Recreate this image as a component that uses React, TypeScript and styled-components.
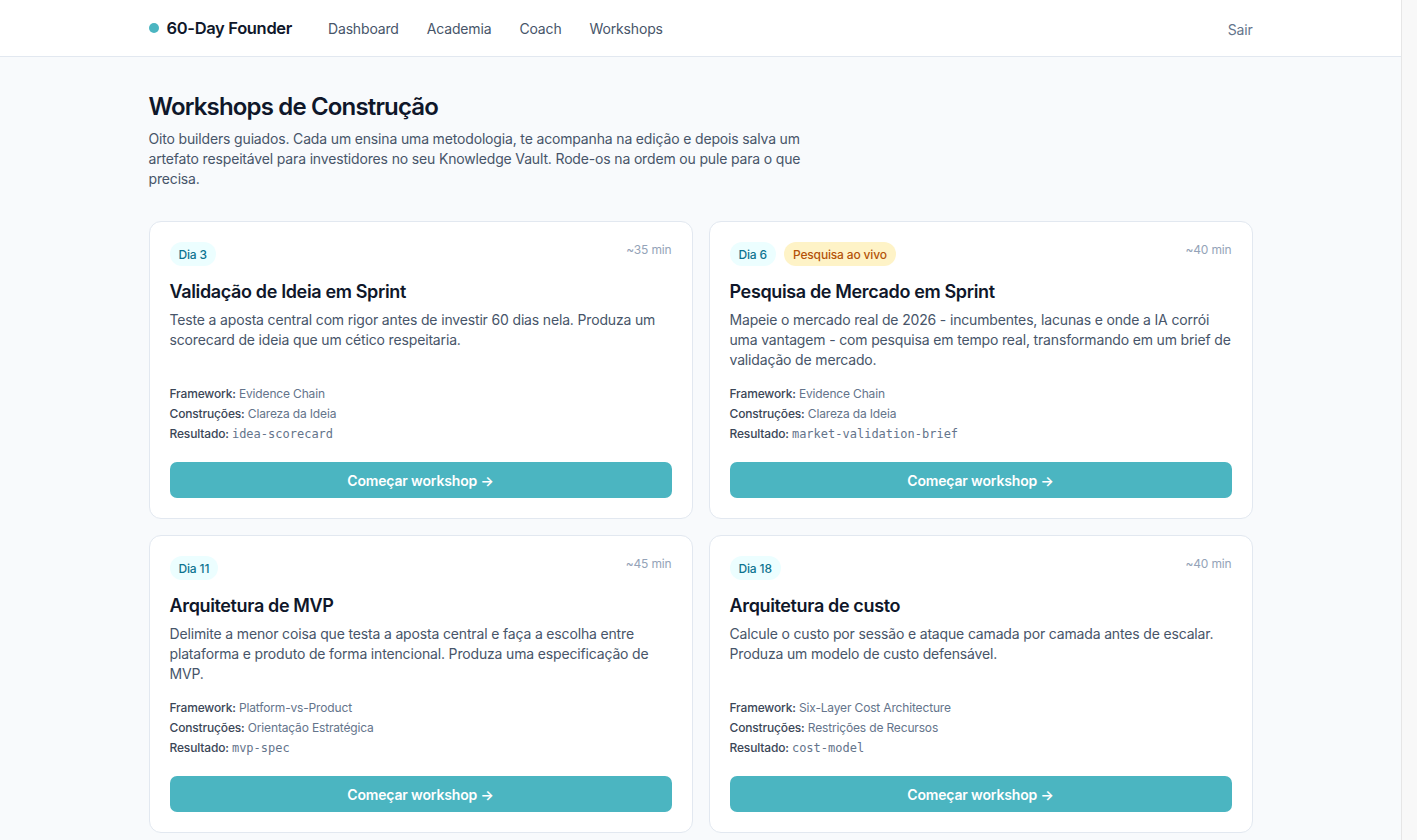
import styled, { createGlobalStyle } from "styled-components";

type Workshop = {
  day: number;
  live?: boolean;
  minutes: number;
  title: string;
  description: string;
  framework: string;
  builds: string;
  output: string;
};

const workshops: Workshop[] = [
  {
    day: 3,
    minutes: 35,
    title: "Validação de Ideia em Sprint",
    description:
      "Teste a aposta central com rigor antes de investir 60 dias nela. Produza um scorecard de ideia que um cético respeitaria.",
    framework: "Evidence Chain",
    builds: "Clareza da Ideia",
    output: "idea-scorecard",
  },
  {
    day: 6,
    live: true,
    minutes: 40,
    title: "Pesquisa de Mercado em Sprint",
    description:
      "Mapeie o mercado real de 2026 - incumbentes, lacunas e onde a IA corrói uma vantagem - com pesquisa em tempo real, transformando em um brief de validação de mercado.",
    framework: "Evidence Chain",
    builds: "Clareza da Ideia",
    output: "market-validation-brief",
  },
  {
    day: 11,
    minutes: 45,
    title: "Arquitetura de MVP",
    description:
      "Delimite a menor coisa que testa a aposta central e faça a escolha entre plataforma e produto de forma intencional. Produza uma especificação de MVP.",
    framework: "Platform-vs-Product",
    builds: "Orientação Estratégica",
    output: "mvp-spec",
  },
  {
    day: 18,
    minutes: 40,
    title: "Arquitetura de custo",
    description:
      "Calcule o custo por sessão e ataque camada por camada antes de escalar. Produza um modelo de custo defensável.",
    framework: "Six-Layer Cost Architecture",
    builds: "Restrições de Recursos",
    output: "cost-model",
  },
  {
    day: 25,
    minutes: 40,
    title: "Estratégia de Go-to-Market",
    description:
      "Escolha o primeiro canal e o primeiro segmento com critério. Produza um plano de lançamento que caiba no seu orçamento.",
    framework: "Channel-Fit Matrix",
    builds: "Orientação Estratégica",
    output: "gtm-plan",
  },
  {
    day: 32,
    minutes: 35,
    title: "Modelo de Precificação",
    description:
      "Defina o preço a partir do valor entregue, não do custo. Produza uma tabela de preços com hipóteses explícitas.",
    framework: "Value-Based Pricing",
    builds: "Restrições de Recursos",
    output: "pricing-model",
  },
  {
    day: 44,
    live: true,
    minutes: 45,
    title: "Análise Competitiva",
    description:
      "Compare alternativas reais que seu cliente usa hoje, com pesquisa em tempo real. Produza um mapa competitivo honesto.",
    framework: "Evidence Chain",
    builds: "Clareza da Ideia",
    output: "competitive-map",
  },
  {
    day: 55,
    minutes: 50,
    title: "Narrativa de Pitch",
    description:
      "Transforme os artefatos do seu Knowledge Vault em uma história coerente para investidores. Produza um roteiro de pitch.",
    framework: "Narrative Arc",
    builds: "Orientação Estratégica",
    output: "pitch-narrative",
  },
];

export default function App() {
  return (
    <>
      <GlobalStyle />
      <Header>
        <HeaderInner>
          <Brand>
            <BrandDot />
            60-Day Founder
          </Brand>
          <Nav>
            <NavLink>Dashboard</NavLink>
            <NavLink>Academia</NavLink>
            <NavLink>Coach</NavLink>
            <NavLink>Workshops</NavLink>
          </Nav>
          <SignOut>Sair</SignOut>
        </HeaderInner>
      </Header>
      <Main>
        <Title>Workshops de Construção</Title>
        <Intro>
          Oito builders guiados. Cada um ensina uma metodologia, te acompanha na
          edição e depois salva um artefato respeitável para investidores no seu
          Knowledge Vault. Rode-os na ordem ou pule para o que precisa.
        </Intro>
        <Grid>
          {workshops.map((w) => (
            <Card key={w.day}>
              <CardTop>
                <Badges>
                  <Badge>Dia {w.day}</Badge>
                  {w.live && <Badge $tone="amber">Pesquisa ao vivo</Badge>}
                </Badges>
                <Duration>~{w.minutes} min</Duration>
              </CardTop>
              <CardTitle>{w.title}</CardTitle>
              <Description>{w.description}</Description>
              <Meta>
                <MetaRow>
                  <MetaLabel>Framework:</MetaLabel> <MetaValue>{w.framework}</MetaValue>
                </MetaRow>
                <MetaRow>
                  <MetaLabel>Construções:</MetaLabel> <MetaValue>{w.builds}</MetaValue>
                </MetaRow>
                <MetaRow>
                  <MetaLabel>Resultado:</MetaLabel> <Code>{w.output}</Code>
                </MetaRow>
              </Meta>
              <StartButton>Começar workshop →</StartButton>
            </Card>
          ))}
        </Grid>
      </Main>
    </>
  );
}

// the reference was taken with a 15px page scrollbar, so keep that gutter
const GlobalStyle = createGlobalStyle`
  html {
    background: #f8f8f8;
  }
  body {
    margin: 0;
    margin-right: 15px;
    border-right: 1px solid #e6e6e6;
    min-height: 100vh;
    background: #f8fafc;
    font-family: Inter, "Noto Sans", sans-serif;
    letter-spacing: -0.01em;
    color: #0f172a;
  }
`;

const Header = styled.header`
  background: #ffffff;
  border-bottom: 1px solid #e2e8f0;
`;

const HeaderInner = styled.div`
  max-width: 1104px;
  margin: 0 auto;
  height: 56px;
  display: flex;
  align-items: center;
`;

const Brand = styled.div`
  display: flex;
  align-items: center;
  gap: 8px;
  font-size: 16.5px;
  font-weight: 600;
  letter-spacing: -0.02em;
  color: #0f172a;
`;

const BrandDot = styled.span`
  width: 10px;
  height: 10px;
  border-radius: 50%;
  background: #4bb5c1;
`;

const Nav = styled.nav`
  display: flex;
  gap: 28px;
  margin-left: 36px;
`;

const NavLink = styled.a`
  font-size: 14px;
  color: #475569;
  cursor: pointer;
`;

const SignOut = styled.button`
  margin-left: auto;
  border: none;
  background: none;
  padding: 0;
  font-family: inherit;
  letter-spacing: inherit;
  font-size: 14px;
  color: #64748b;
  margin-top: 2px;
`;

const Main = styled.main`
  max-width: 1104px;
  margin: 0 auto;
  padding: 34px 0 64px;
`;

const Title = styled.h1`
  margin: 0;
  font-size: 24px;
  line-height: 32px;
  font-weight: 600;
  letter-spacing: -0.035em;
  color: #0f172a;
`;

const Intro = styled.p`
  margin: 6px 0 0;
  max-width: 672px;
  font-size: 14px;
  line-height: 20px;
  color: #475569;
`;

const Grid = styled.div`
  display: grid;
  grid-template-columns: 1fr 1fr;
  gap: 16px;
  margin-top: 32px;
`;

const Card = styled.div`
  display: flex;
  flex-direction: column;
  background: #ffffff;
  border: 1px solid #e2e8f0;
  border-radius: 12px;
  padding: 19px 20px 20px;
`;

const CardTop = styled.div`
  display: flex;
  justify-content: space-between;
  align-items: flex-start;
`;

const Badges = styled.div`
  display: flex;
  gap: 8px;
  margin-top: 1px;
`;

const Badge = styled.span<{ $tone?: "amber" }>`
  display: inline-flex;
  align-items: center;
  height: 24px;
  padding: 0 9px;
  border-radius: 999px;
  font-size: 12px;
  font-weight: 500;
  background: ${(p) => (p.$tone === "amber" ? "#fef3c7" : "#ecfeff")};
  color: ${(p) => (p.$tone === "amber" ? "#b45309" : "#0e7490")};
`;

const Duration = styled.span`
  font-size: 12px;
  line-height: 18px;
  color: #94a3b8;
`;

const CardTitle = styled.h2`
  margin: 12px 0 4px;
  font-size: 18px;
  line-height: 28px;
  font-weight: 600;
  letter-spacing: -0.02em;
  color: #0f172a;
`;

const Description = styled.p`
  flex: 1;
  margin: 0;
  font-size: 14px;
  line-height: 20px;
  color: #475569;
`;

const Meta = styled.div`
  margin-top: 14px;
  display: flex;
  flex-direction: column;
`;

const MetaRow = styled.div`
  font-size: 12px;
  line-height: 20px;
`;

const MetaLabel = styled.span`
  font-weight: 500;
  color: #3b4657;
`;

const MetaValue = styled.span`
  color: #64748b;
`;

const Code = styled.code`
  font-family: "DejaVu Sans Mono", "Liberation Mono", monospace;
  font-size: 12px;
  letter-spacing: 0;
  color: #64748b;
`;

const StartButton = styled.button`
  margin-top: 18px;
  height: 36px;
  border: none;
  border-radius: 7px;
  background: #4bb5c1;
  color: #ffffff;
  font-family: inherit;
  letter-spacing: inherit;
  font-size: 14px;
  font-weight: 600;
  cursor: pointer;
`;
